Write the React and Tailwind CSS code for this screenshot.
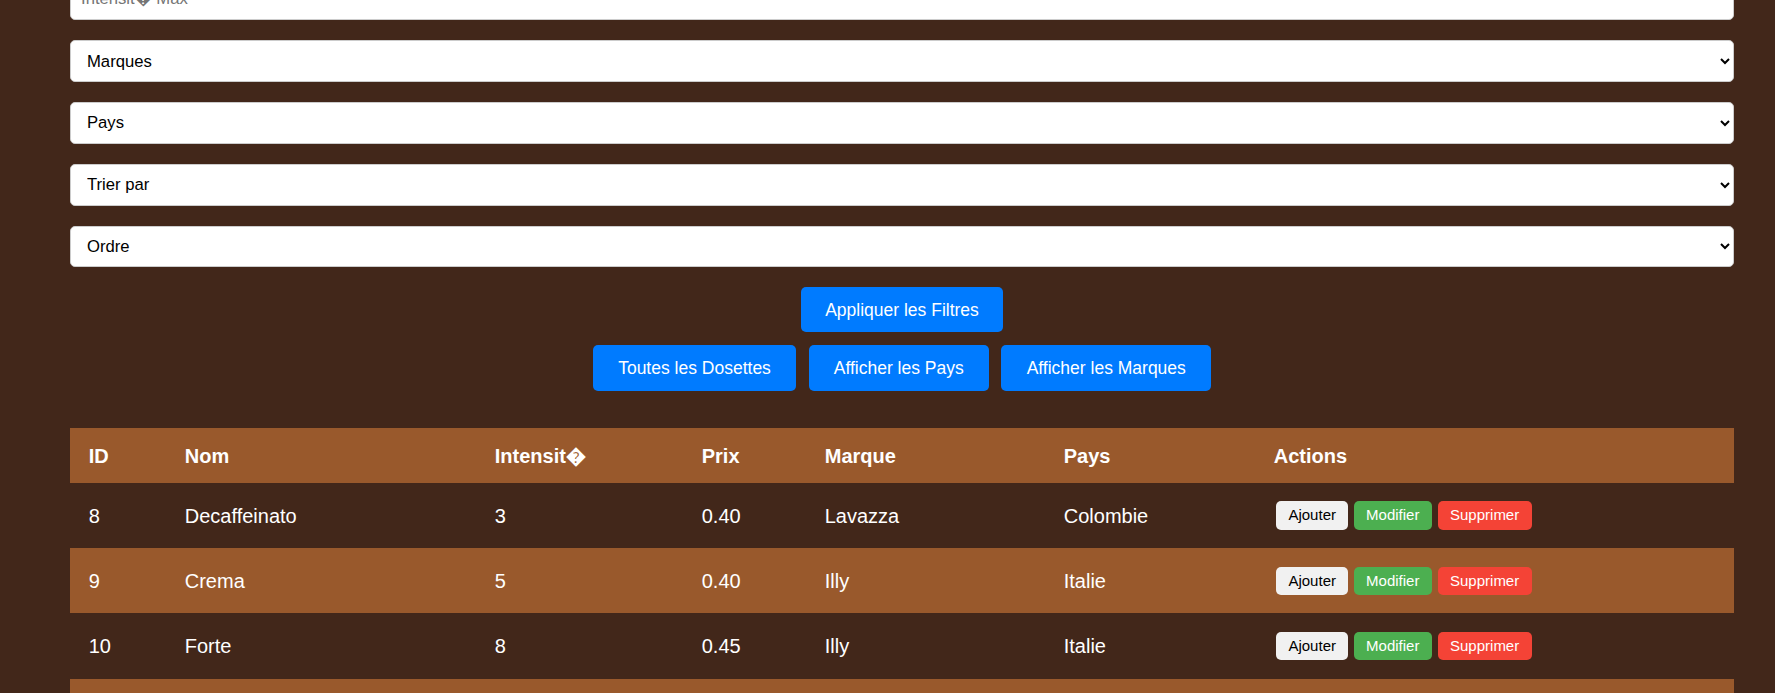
import React from "react";

const rows = [
  { id: 8, nom: "Decaffeinato", int: 3, prix: "0.40", marque: "Lavazza", pays: "Colombie" },
  { id: 9, nom: "Crema", int: 5, prix: "0.40", marque: "Illy", pays: "Italie" },
  { id: 10, nom: "Forte", int: 8, prix: "0.45", marque: "Illy", pays: "Italie" },
];

const selects = ["Marques", "Pays", "Trier par", "Ordre"];

export default function App() {
  return (
    <div className="h-[693px] overflow-hidden bg-[#42271a] font-['Liberation_Sans',Arial,sans-serif]">
      <div className="ml-[70px] w-[1664px] mt-[-21.45px] flex flex-col">
        <div className="flex flex-col gap-[20px]">
          <input
            type="text"
            placeholder="Intensit� Max"
            className="h-[41.75px] w-full bg-white border border-[#cccccc] rounded-[5px] px-[10px] text-[16.67px] text-black placeholder:text-[#757575] outline-none"
          />
          {selects.map((s) => (
            <select
              key={s}
              defaultValue=""
              className="h-[41.75px] w-full bg-white border border-[#cccccc] rounded-[5px] pl-[12px] pr-[4px] text-[16.67px] text-black outline-none"
            >
              <option value="">{s}</option>
            </select>
          ))}
        </div>

        <div className="flex justify-center mt-[20px]">
          <button className="h-[45px] px-[24px] bg-[#007bff] text-white text-[17.5px] rounded-[5px]">
            Appliquer les Filtres
          </button>
        </div>
        <div className="flex justify-center gap-[12.5px] mt-[12.8px]">
          <button className="h-[45.7px] px-[25.2px] bg-[#007bff] text-white text-[17.5px] rounded-[5px]">
            Toutes les Dosettes
          </button>
          <button className="h-[45.7px] px-[25.2px] bg-[#007bff] text-white text-[17.5px] rounded-[5px]">
            Afficher les Pays
          </button>
          <button className="h-[45.7px] px-[25.2px] bg-[#007bff] text-white text-[17.5px] rounded-[5px]">
            Afficher les Marques
          </button>
        </div>

        <table className="mt-[37.6px] w-full table-fixed border-collapse text-white text-[20px]">
          <colgroup>
            <col className="w-[96px]" />
            <col className="w-[310px]" />
            <col className="w-[207px]" />
            <col className="w-[123px]" />
            <col className="w-[239px]" />
            <col className="w-[210px]" />
            <col />
          </colgroup>
          <thead>
            <tr className="h-[54.5px] bg-[#99592c]">
              {["ID", "Nom", "Intensit�", "Prix", "Marque", "Pays", "Actions"].map((h) => (
                <th key={h} className="px-[18.75px] text-left font-bold align-middle">
                  {h}
                </th>
              ))}
            </tr>
          </thead>
          <tbody>
            {rows.map((r, i) => (
              <tr key={r.id} className={i % 2 === 1 ? "h-[65.3px] bg-[#99592c]" : "h-[65.3px]"}>
                <td className="px-[18.75px] align-middle">{r.id}</td>
                <td className="px-[18.75px] align-middle">{r.nom}</td>
                <td className="px-[18.75px] align-middle">{r.int}</td>
                <td className="px-[18.75px] align-middle">{r.prix}</td>
                <td className="px-[18.75px] align-middle">{r.marque}</td>
                <td className="px-[18.75px] align-middle">{r.pays}</td>
                <td className="px-[18.75px] align-middle">
                  <div className="flex gap-[5.6px] ml-[2.7px]">
                    <button className="h-[28.5px] px-[12px] bg-[#f1f1f1] text-black text-[15px] rounded-[5px]">
                      Ajouter
                    </button>
                    <button className="h-[28.5px] px-[12.5px] bg-[#4caf50] text-white text-[15px] rounded-[5px]">
                      Modifier
                    </button>
                    <button className="h-[28.5px] px-[12.5px] bg-[#f44336] text-white text-[15px] rounded-[5px]">
                      Supprimer
                    </button>
                  </div>
                </td>
              </tr>
            ))}
            <tr className="h-[65.3px] bg-[#99592c]">
              <td colSpan={7}></td>
            </tr>
          </tbody>
        </table>
      </div>
    </div>
  );
}
